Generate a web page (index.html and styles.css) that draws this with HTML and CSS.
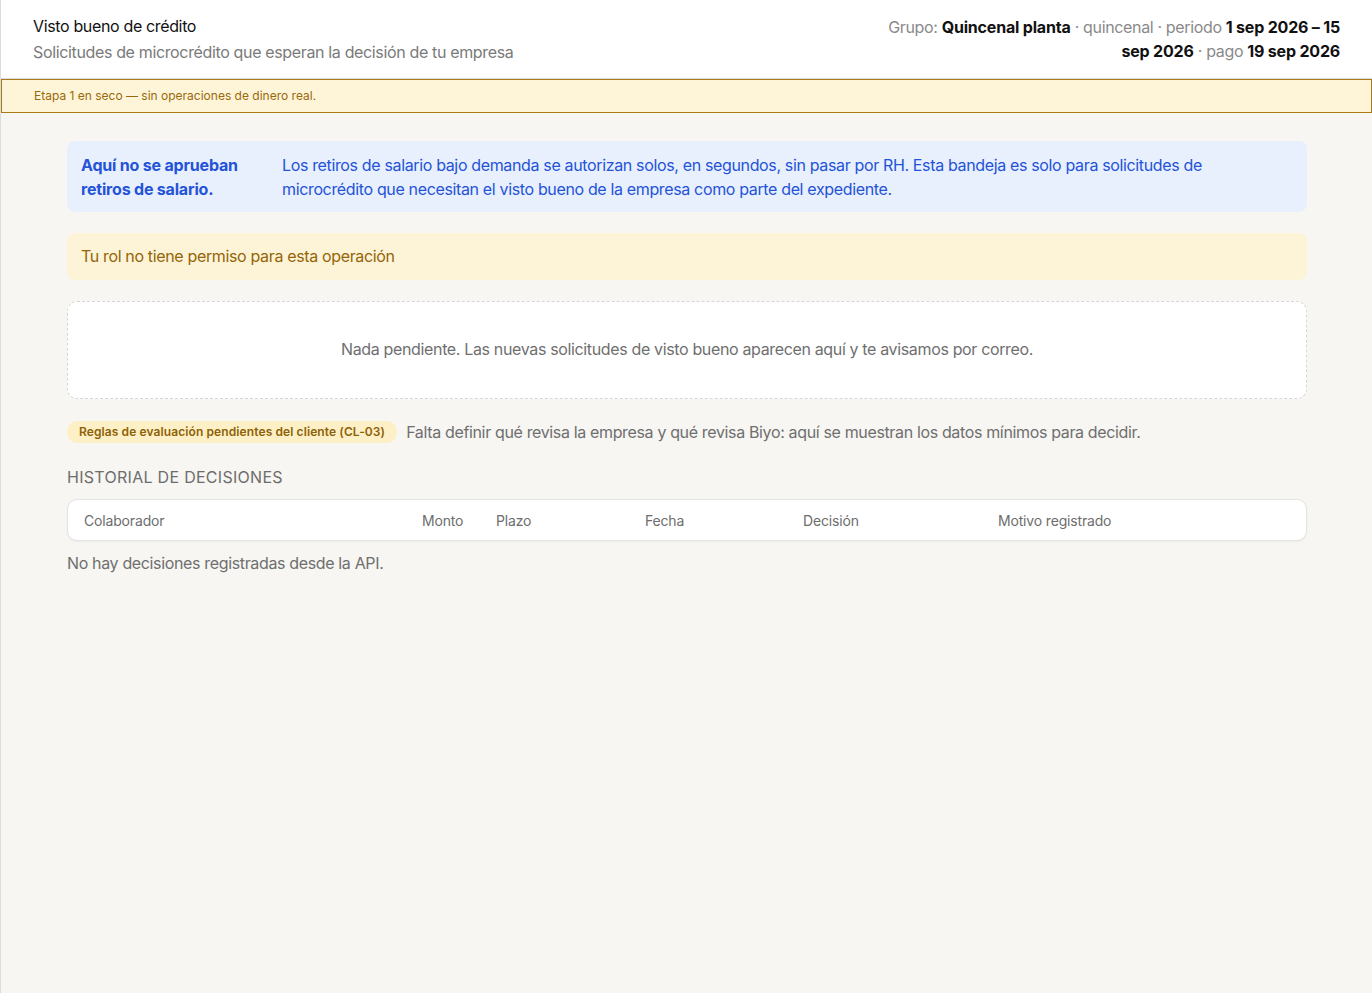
FILE: index.html
```html
<!DOCTYPE html>
<html lang="es">
<head>
<meta charset="utf-8">
<title>Visto bueno de crédito</title>
<link rel="stylesheet" href="styles.css">
</head>
<body>
<div class="shell">
  <header class="topbar">
    <div class="topbar-titles">
      <div class="topbar-title">Visto bueno de crédito</div>
      <div class="topbar-sub">Solicitudes de microcrédito que esperan la decisión de tu empresa</div>
    </div>
    <div class="topbar-meta">
      Grupo: <strong>Quincenal planta</strong> · quincenal · periodo <strong>1 sep 2026 – 15</strong> <strong>sep 2026</strong> · pago <strong>19 sep 2026</strong>
    </div>
  </header>

  <div class="dry-banner">Etapa 1 en seco — sin operaciones de dinero real.</div>

  <main class="content">
    <section class="note note-info">
      <div class="note-title">Aquí no se aprueban retiros de salario.</div>
      <p class="note-body">Los retiros de salario bajo demanda se autorizan solos, en segundos, sin pasar por RH. Esta bandeja es solo para solicitudes de microcrédito que necesitan el visto bueno de la empresa como parte del expediente.</p>
    </section>

    <section class="note note-warn">Tu rol no tiene permiso para esta operación</section>

    <section class="empty">Nada pendiente. Las nuevas solicitudes de visto bueno aparecen aquí y te avisamos por correo.</section>

    <div class="rules">
      <span class="pill">Reglas de evaluación pendientes del cliente (CL-03)</span>
      <span class="rules-text">Falta definir qué revisa la empresa y qué revisa Biyo: aquí se muestran los datos mínimos para decidir.</span>
    </div>

    <h2 class="section-title">Historial de decisiones</h2>

    <div class="table-card">
      <table class="history">
        <colgroup>
          <col class="c-colab">
          <col class="c-monto">
          <col class="c-plazo">
          <col class="c-fecha">
          <col class="c-decision">
          <col class="c-motivo">
        </colgroup>
        <thead>
          <tr>
            <th>Colaborador</th>
            <th>Monto</th>
            <th>Plazo</th>
            <th>Fecha</th>
            <th>Decisión</th>
            <th>Motivo registrado</th>
          </tr>
        </thead>
      </table>
    </div>

    <p class="muted">No hay decisiones registradas desde la API.</p>
  </main>
</div>
</body>
</html>
```

FILE: styles.css
```css
* { box-sizing: border-box; }

html, body {
  margin: 0;
  padding: 0;
  height: 100%;
}

body {
  font-family: Inter, "Noto Sans", "Liberation Sans", sans-serif;
  font-size: 16px;
  letter-spacing: -0.022em;
  color: #1a1a1a;
  background: #f7f6f2;
}

strong { letter-spacing: -0.012em; }

.shell {
  min-height: 100%;
  border-left: 1px solid #dcdcdc;
}

/* top bar */
.topbar {
  display: flex;
  justify-content: space-between;
  align-items: flex-start;
  background: #ffffff;
  padding: 13px 32px 13px 32px;
  border-bottom: 1px solid #dedede;
}

.topbar-title {
  font-size: 16px;
  line-height: 26px;
  color: #111111;
}

.topbar-sub {
  font-size: 16px;
  line-height: 26px;
  color: #7a7a7a;
}

.topbar-meta {
  max-width: 462px;
  text-align: right;
  font-size: 16px;
  line-height: 24px;
  color: #8a8a8a;
  padding-top: 2px;
}

.topbar-meta strong {
  color: #111111;
  font-weight: 700;
}

/* dry-run banner */
.dry-banner {
  background: #fef5d8;
  border: 1px solid #a87b16;
  color: #98690c;
  font-size: 12px;
  letter-spacing: 0;
  line-height: 15px;
  padding: 8px 32px 9px;
}

/* main column */
.content {
  padding: 28px 65px 40px 66px;
  display: flex;
  flex-direction: column;
}

.note {
  border-radius: 8px;
}

.note-info {
  display: flex;
  gap: 24px;
  background: #e8f0fd;
  color: #2453d8;
  padding: 12px 14px 11px;
  line-height: 24px;
}

.note-title {
  flex: 0 0 177px;
  font-weight: 700;
  letter-spacing: -0.012em;
}

.note-body {
  margin: 0;
  max-width: 930px;
}

.note-warn {
  margin-top: 21px;
  background: #fdf4d7;
  color: #946508;
  padding: 12px 14px;
  line-height: 23px;
}

.empty {
  margin-top: 21px;
  background: #ffffff;
  border: 1px dashed #d6d6d6;
  border-radius: 10px;
  padding: 36px 16px 37px;
  text-align: center;
  line-height: 23px;
  color: #6f6f6f;
}

.rules {
  margin-top: 22px;
  display: flex;
  align-items: center;
  gap: 9px;
}

.pill {
  background: #fdf0c7;
  color: #8e6106;
  font-size: 12px;
  font-weight: 600;
  letter-spacing: 0.1px;
  line-height: 16px;
  padding: 3px 12px;
  border-radius: 11px;
}

.rules-text {
  color: #6f6f6f;
  line-height: 20px;
}

.section-title {
  margin: 24px 0 0;
  font-size: 16px;
  font-weight: 400;
  line-height: 20px;
  letter-spacing: 0.018em;
  text-transform: uppercase;
  color: #6d6d6d;
}

.table-card {
  margin-top: 12px;
  background: #ffffff;
  border: 1px solid #e4e4e4;
  border-radius: 10px;
  box-shadow: 0 1px 2px rgba(0, 0, 0, 0.05);
  overflow: hidden;
}

.history {
  width: 100%;
  border-collapse: collapse;
  table-layout: fixed;
}

.history th {
  text-align: left;
  font-weight: 400;
  font-size: 14px;
  letter-spacing: -0.012em;
  line-height: 20px;
  color: #6d6d6d;
  padding: 11px 16px 9px;
}

.c-colab { width: 338px; }
.c-monto { width: 74px; }
.c-plazo { width: 149px; }
.c-fecha { width: 158px; }
.c-decision { width: 195px; }

.muted {
  margin: 10px 0 0;
  line-height: 24px;
  color: #6f6f6f;
}
```
